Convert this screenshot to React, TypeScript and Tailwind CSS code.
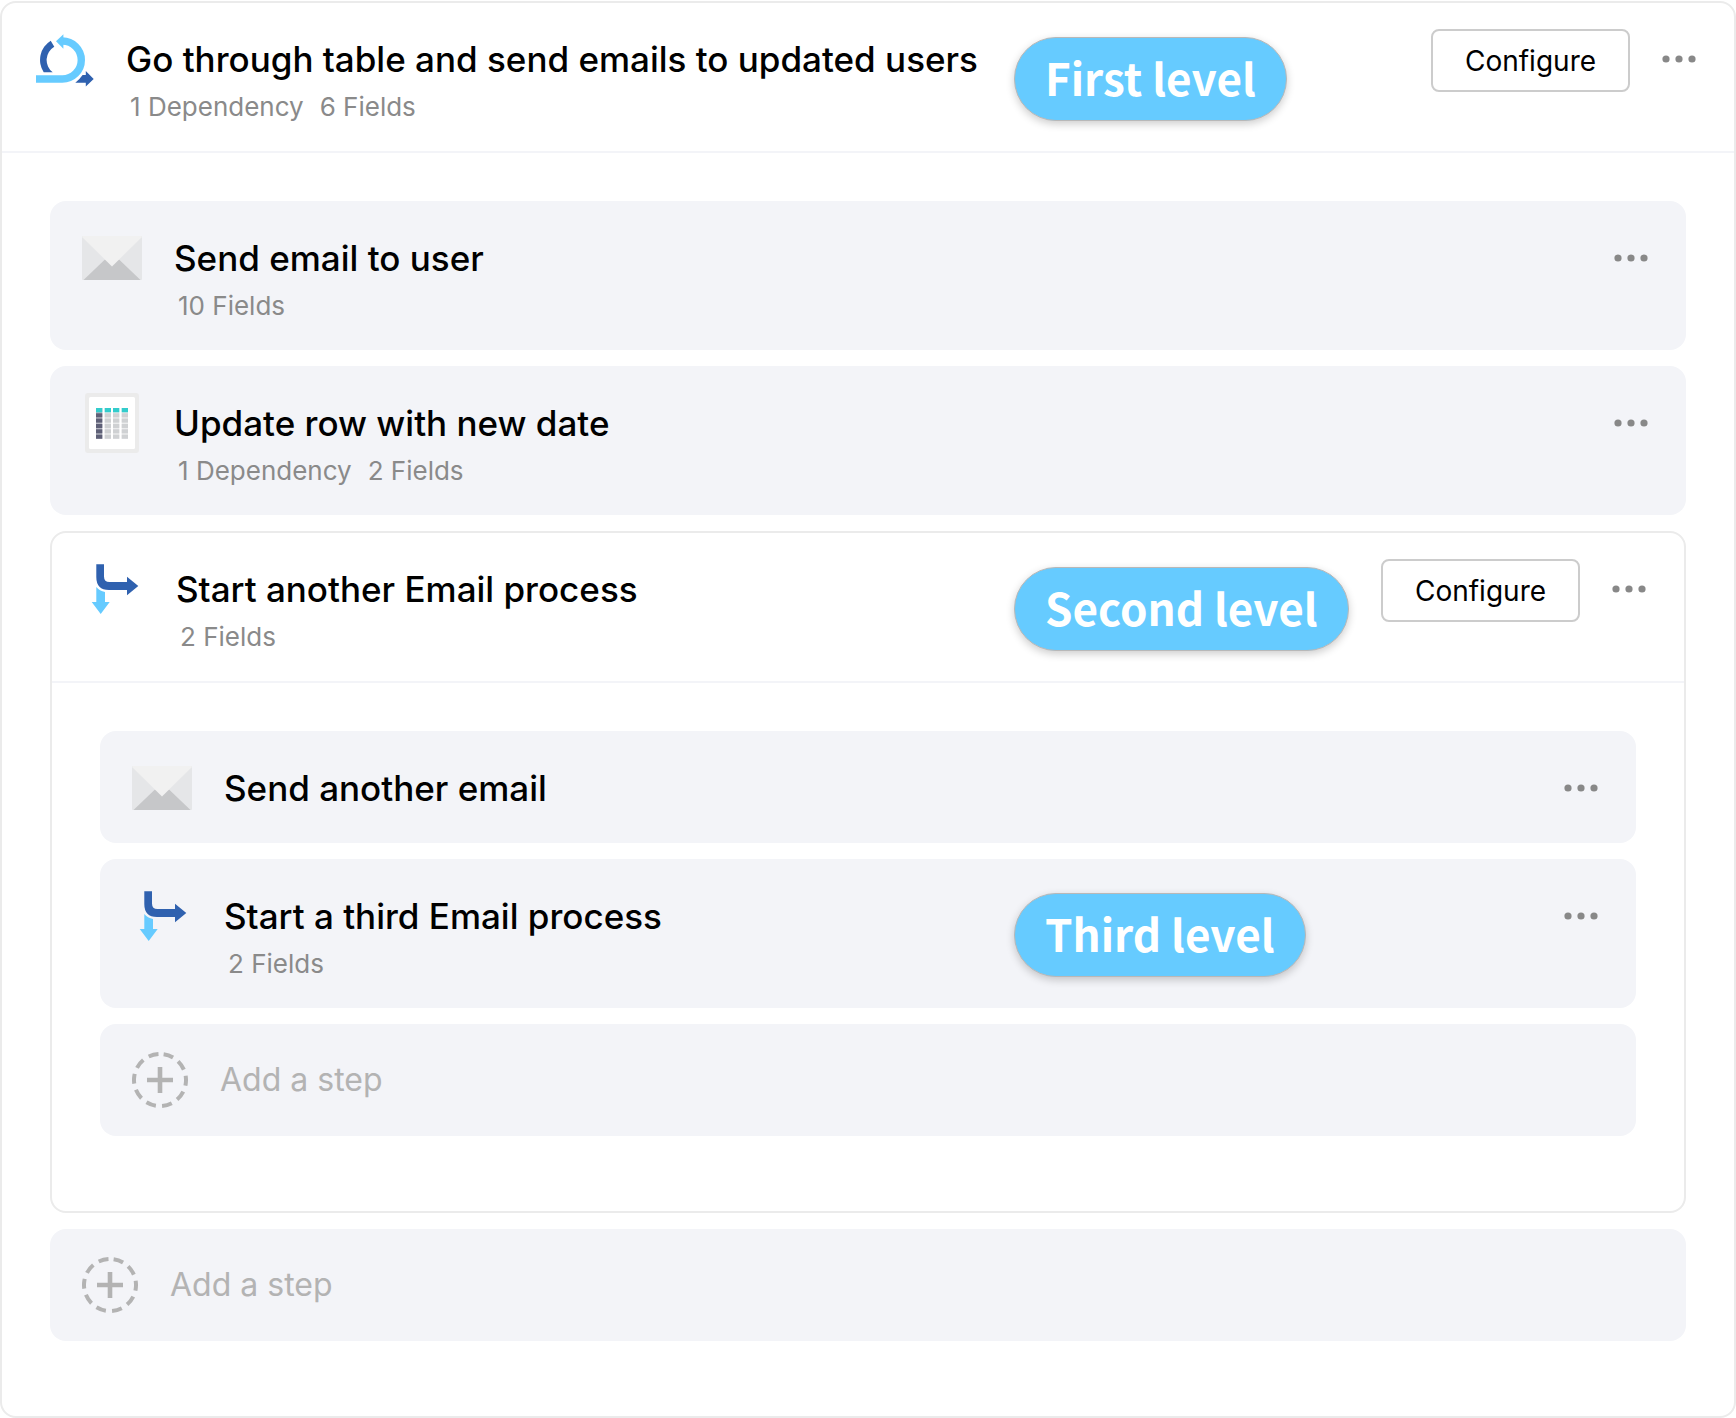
import type { ReactNode } from 'react'

function LoopIcon() {
  return (
    <svg viewBox="0 0 60 60" className="w-15 h-15" aria-hidden="true">
      <path
        d="M9.7 43.3A22.7 22.7 0 0 1 16.7 11.7L20.3 17.7A15.4 15.4 0 0 0 18.7 43.3Z"
        fill="#2f61af"
      />
      <path
        d="M2 50H28.3A19 19 0 0 0 28.3 12"
        fill="none"
        stroke="#66cbff"
        strokeWidth="7.4"
      />
      <path d="M22 12.3L29.4 5.2V19.7Z" fill="#66cbff" />
      <path
        d="M41.3 53.7Q45.5 50.5 48.6 46H51.8V42L59.7 50L51.8 57.4V53.7Z"
        fill="#2f61af"
      />
    </svg>
  )
}

function BranchIcon() {
  return (
    <svg viewBox="0 0 60 60" className="w-15 h-15" aria-hidden="true">
      <path
        d="M12.3 5.3H20V17.5Q20 23 25.5 23H43V17.7L54.3 27L43 36.3V31H25Q12.3 31 12.3 18Z"
        fill="#2f61af"
      />
      <path
        d="M12.3 28Q15.5 32 21 33V43H25.7L16.7 55L7.7 43H12.3Z"
        fill="#66cbff"
      />
    </svg>
  )
}

function EmailIcon() {
  return (
    <svg viewBox="0 0 60 60" className="w-15 h-15" aria-hidden="true">
      <rect y="8" width="60" height="44" rx="1" fill="#e5e6e8" />
      <path d="M1.5 52L22.7 31.7H37.3L58.5 52Z" fill="#c6c7c9" />
      <path d="M0 9Q0 8 1 8H59Q60 8 60 9L30 38.5Z" fill="#f1f1f1" />
    </svg>
  )
}

const gridCols = [14, 22.7, 31, 39.7]
const gridRows = [20.3, 25.6, 31, 36.3, 41.7]

function TableIcon() {
  return (
    <svg viewBox="0 0 60 60" className="w-15 h-15" aria-hidden="true">
      <rect x="3" width="54" height="60" rx="3" fill="#ebebeb" />
      <rect x="7" y="4" width="46" height="52" rx="1.5" fill="#fff" />
      {gridCols.map((x, i) => (
        <g key={x}>
          <rect
            x={x}
            y="15"
            width="6.3"
            height="31"
            fill={i === 0 ? '#b5b6c1' : '#ebeced'}
          />
          <rect x={x} y="15" width="6.3" height="4.3" fill="#33cccc" />
          {gridRows.map((y) => (
            <rect
              key={y}
              x={x}
              y={y}
              width="6.3"
              height="4"
              fill={i === 0 ? '#5e6077' : '#cfd1d3'}
            />
          ))}
        </g>
      ))}
    </svg>
  )
}

function AddIcon() {
  return (
    <svg viewBox="0 0 56 56" className="w-14 h-14" aria-hidden="true">
      <circle
        cx="28"
        cy="28"
        r="26"
        fill="none"
        stroke="#b3b3b3"
        strokeWidth="4"
        strokeDasharray="10 6.34"
        transform="rotate(-82 28 28)"
      />
      <path d="M28 15V41M15 28H41" stroke="#b3b3b3" strokeWidth="4.6" />
    </svg>
  )
}

function MoreButton() {
  return (
    <button
      type="button"
      aria-label="More options"
      className="flex items-center h-15 shrink-0 cursor-pointer"
    >
      <svg viewBox="0 0 34 8" className="w-[34px] h-2" aria-hidden="true">
        <circle cx="4" cy="4" r="3.6" fill="#888" />
        <circle cx="17" cy="4" r="3.6" fill="#888" />
        <circle cx="30" cy="4" r="3.6" fill="#888" />
      </svg>
    </button>
  )
}

function LevelBadge({ children, className }: { children: string; className: string }) {
  return (
    <span
      className={`absolute top-[34px] flex items-center h-[84px] px-[30px] pb-1 rounded-full border border-[#b8b8b8] bg-[#66cbff] shadow-[0_3px_8px_rgba(0,0,0,0.2)] font-['Noto_Sans_CJK_JP',sans-serif] font-bold text-[44px] text-white whitespace-nowrap ${className}`}
    >
      {children}
    </span>
  )
}

type StepContentProps = {
  icon: ReactNode
  title: string
  meta?: string[]
  configurable?: boolean
}

function StepContent({ icon, title, meta, configurable }: StepContentProps) {
  return (
    <>
      <div className="w-15 h-15 shrink-0">{icon}</div>
      <div className="flex-1 min-w-0 ml-8 pt-[6px] pb-[3px]">
        <p className="font-medium text-[35px] leading-12 whitespace-nowrap">{title}</p>
        {meta && (
          <div className="flex gap-4 mt-2 ml-1 text-[26px] leading-8 text-[#8a8a8a]">
            {meta.map((item) => (
              <p key={item}>{item}</p>
            ))}
          </div>
        )}
      </div>
      {configurable && (
        <button
          type="button"
          className="w-[199px] h-[63px] mr-8 shrink-0 rounded-lg border-2 border-[#ccc] bg-white text-[28px] cursor-pointer"
        >
          Configure
        </button>
      )}
      <MoreButton />
    </>
  )
}

function StepRow({ children }: { children: ReactNode }) {
  return (
    <div className="relative flex items-start pl-8 pr-[38px] pt-[27px] pb-[25px] rounded-2xl bg-[#f3f4f8]">
      {children}
    </div>
  )
}

function Process({ header, children }: { header: ReactNode; children: ReactNode }) {
  return (
    <section className="rounded-2xl border-2 border-[#ebebeb] bg-white">
      <header className="relative flex items-start pl-8 pr-[38px] pt-[26px] pb-[25px] border-b-2 border-[#f3f4f8]">
        {header}
      </header>
      <div className="flex flex-col gap-4 px-12 pt-12 pb-[75px]">{children}</div>
    </section>
  )
}

function AddStep() {
  return (
    <button
      type="button"
      className="flex items-center w-full h-28 px-8 rounded-2xl bg-[#f3f4f8] text-[32px] text-[#b3b3b3] cursor-pointer"
    >
      <AddIcon />
      <span className="ml-8">Add a step</span>
    </button>
  )
}

function App() {
  return (
    <main className="pt-px bg-white font-[Inter,sans-serif] text-black">
      <Process
        header={
          <>
            <StepContent
              icon={<LoopIcon />}
              title="Go through table and send emails to updated users"
              meta={['1 Dependency', '6 Fields']}
              configurable
            />
            <LevelBadge className="left-[1012px]">First level</LevelBadge>
          </>
        }
      >
        <StepRow>
          <StepContent icon={<EmailIcon />} title="Send email to user" meta={['10 Fields']} />
        </StepRow>
        <StepRow>
          <StepContent
            icon={<TableIcon />}
            title="Update row with new date"
            meta={['1 Dependency', '2 Fields']}
          />
        </StepRow>

        {/* Second level process */}
        <Process
          header={
            <>
              <StepContent
                icon={<BranchIcon />}
                title="Start another Email process"
                meta={['2 Fields']}
                configurable
              />
              <LevelBadge className="left-[962px]">Second level</LevelBadge>
            </>
          }
        >
          <StepRow>
            <StepContent icon={<EmailIcon />} title="Send another email" />
          </StepRow>
          <StepRow>
            <StepContent
              icon={<BranchIcon />}
              title="Start a third Email process"
              meta={['2 Fields']}
            />
            <LevelBadge className="left-[914px]">Third level</LevelBadge>
          </StepRow>
          <AddStep />
        </Process>

        <AddStep />
      </Process>
    </main>
  )
}

export default App
